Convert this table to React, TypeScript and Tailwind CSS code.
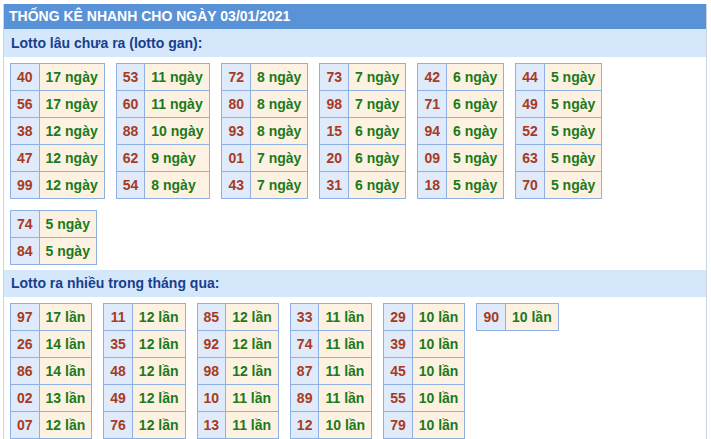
import { Fragment } from "react";

const gan: [string, number][][] = [
  [["40", 17], ["56", 17], ["38", 12], ["47", 12], ["99", 12]],
  [["53", 11], ["60", 11], ["88", 10], ["62", 9], ["54", 8]],
  [["72", 8], ["80", 8], ["93", 8], ["01", 7], ["43", 7]],
  [["73", 7], ["98", 7], ["15", 6], ["20", 6], ["31", 6]],
  [["42", 6], ["71", 6], ["94", 6], ["09", 5], ["18", 5]],
  [["44", 5], ["49", 5], ["52", 5], ["63", 5], ["70", 5]],
  [["74", 5], ["84", 5]],
];

const nhieu: [string, number][][] = [
  [["97", 17], ["26", 14], ["86", 14], ["02", 13], ["07", 12]],
  [["11", 12], ["35", 12], ["48", 12], ["49", 12], ["76", 12]],
  [["85", 12], ["92", 12], ["98", 12], ["10", 11], ["13", 11]],
  [["33", 11], ["74", 11], ["87", 11], ["89", 11], ["12", 10]],
  [["29", 10], ["39", 10], ["45", 10], ["55", 10], ["79", 10]],
  [["90", 10]],
];

function StatTable({ rows, unit }: { rows: [string, number][]; unit: string }) {
  return (
    <div className="grid grid-cols-[auto_auto] border-l border-t border-[#8fb0e2]">
      {rows.map(([num, count]) => (
        <Fragment key={num}>
          <div className="flex h-[27px] items-center justify-center border-r border-b border-[#8fb0e2] bg-[#dfeafb] px-[6px] text-[#a83b1d]">
            {num}
          </div>
          <div className="flex h-[27px] items-center border-r border-b border-[#8fb0e2] bg-[#fdf2e1] px-[6px] text-[#1b7a1b]">
            {count} {unit}
          </div>
        </Fragment>
      ))}
    </div>
  );
}

function Title({ children, tall }: { children: string; tall?: boolean }) {
  return (
    <div className={`flex items-center bg-[#d5e7fb] pl-[7px] text-[#183e8e] ${tall ? "h-[28px]" : "h-[27px]"}`}>
      {children}
    </div>
  );
}

function Tables({ tables, unit }: { tables: [string, number][][]; unit: string }) {
  return (
    <div className="flex w-[668px] flex-wrap items-start gap-x-[11px] gap-y-[11px] pt-[6px] pb-[5px] pl-[6px]">
      {tables.map((t, i) => (
        <StatTable key={i} rows={t} unit={unit} />
      ))}
    </div>
  );
}

export default function App() {
  return (
    <div className="min-h-screen bg-white pt-[4px] pl-[3px] font-['Liberation_Sans',Arial,sans-serif] text-[14px] font-bold">
      <div className="w-[704px] border-x border-[#cdd5df]">
        <div className="flex h-[25px] items-center bg-[#5a92d7] pl-[5px] text-white">
          THỐNG KÊ NHANH CHO NGÀY 03/01/2021
        </div>
        <Title tall>Lotto lâu chưa ra (lotto gan):</Title>
        <Tables tables={gan} unit="ngày" />
        <Title>Lotto ra nhiều trong tháng qua:</Title>
        <Tables tables={nhieu} unit="lần" />
      </div>
    </div>
  );
}
